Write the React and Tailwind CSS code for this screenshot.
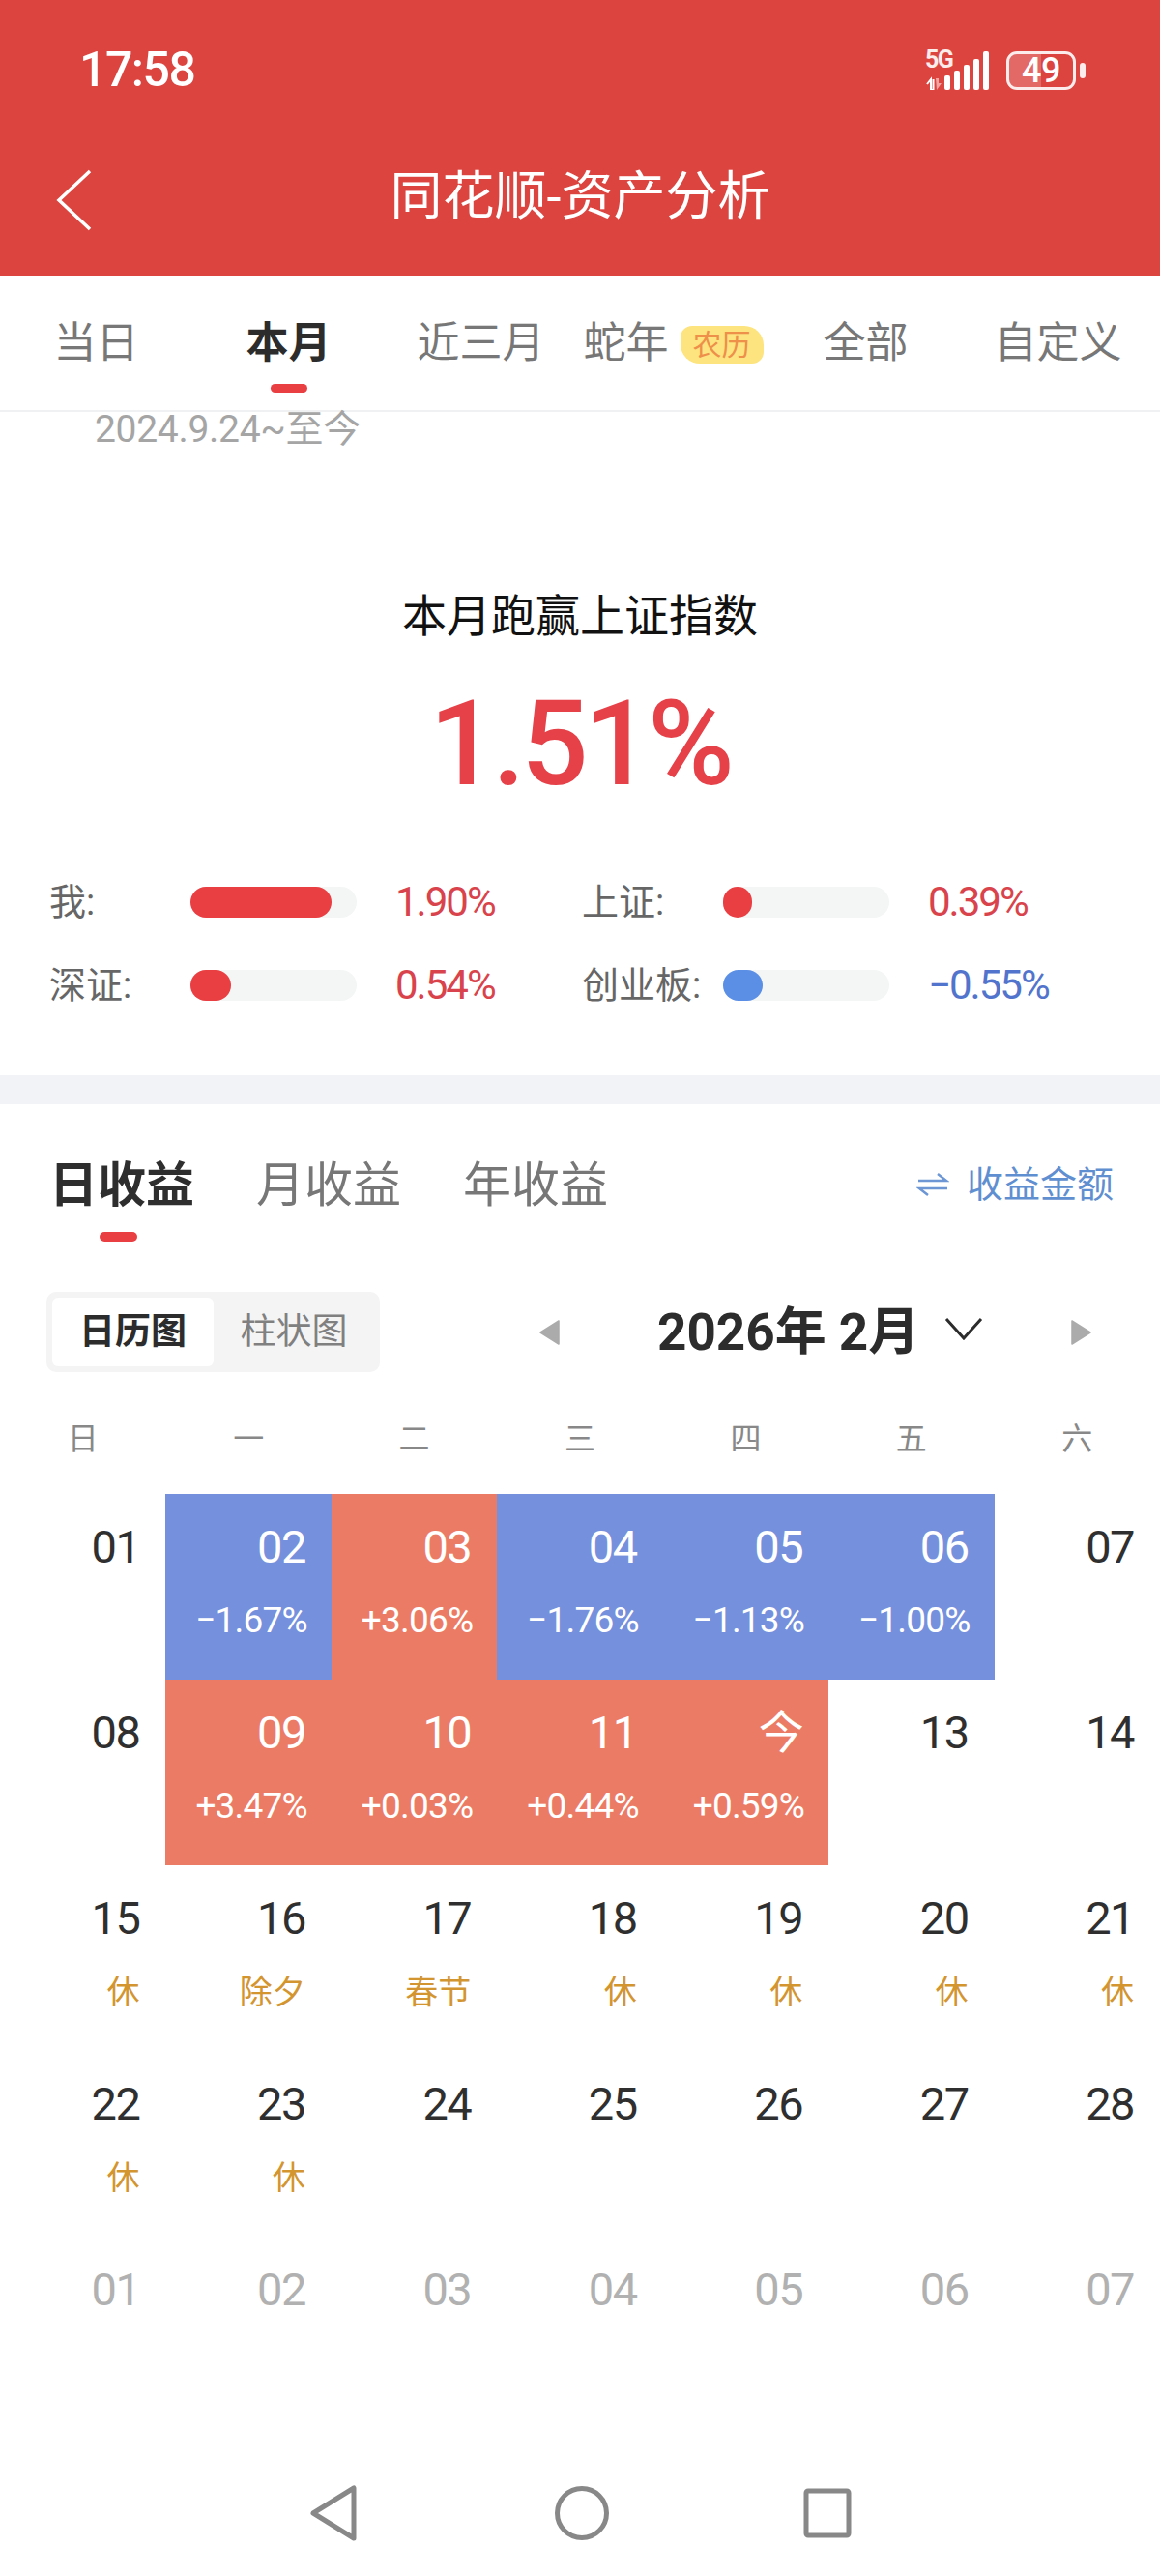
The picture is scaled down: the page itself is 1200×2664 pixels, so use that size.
import React from 'react';

const FONT = '[font-family:Roboto,"Noto_Sans_CJK_SC",sans-serif]';

const periodTabs = ['当日', '本月', '近三月', '蛇年', '全部', '自定义'];

const compareRows = [
  [
    { label: '我:', value: '1.90%', fill: 'w-[146px]', bar: 'bg-[#e93f43]', text: 'text-[#d9434b]' },
    { label: '上证:', value: '0.39%', fill: 'w-[30px]', bar: 'bg-[#e93f43]', text: 'text-[#d9434b]' },
  ],
  [
    { label: '深证:', value: '0.54%', fill: 'w-[42px]', bar: 'bg-[#e93f43]', text: 'text-[#d9434b]' },
    { label: '创业板:', value: '−0.55%', fill: 'w-[41px]', bar: 'bg-[#5b8fe6]', text: 'text-[#5274cc]' },
  ],
];

const weekdays = ['日', '一', '二', '三', '四', '五', '六'];

const BLUE = 'bg-[#7590dc]';
const RED = 'bg-[#ec7b65]';

const days = [
  { d: '01' },
  { d: '02', sub: '−1.67%', bg: BLUE },
  { d: '03', sub: '+3.06%', bg: RED },
  { d: '04', sub: '−1.76%', bg: BLUE },
  { d: '05', sub: '−1.13%', bg: BLUE },
  { d: '06', sub: '−1.00%', bg: BLUE },
  { d: '07' },
  { d: '08' },
  { d: '09', sub: '+3.47%', bg: RED },
  { d: '10', sub: '+0.03%', bg: RED },
  { d: '11', sub: '+0.44%', bg: RED },
  { d: '今', sub: '+0.59%', bg: RED },
  { d: '13' },
  { d: '14' },
  { d: '15', note: '休' },
  { d: '16', note: '除夕' },
  { d: '17', note: '春节' },
  { d: '18', note: '休' },
  { d: '19', note: '休' },
  { d: '20', note: '休' },
  { d: '21', note: '休' },
  { d: '22', note: '休' },
  { d: '23', note: '休' },
  { d: '24' },
  { d: '25' },
  { d: '26' },
  { d: '27' },
  { d: '28' },
  { d: '01', muted: true },
  { d: '02', muted: true },
  { d: '03', muted: true },
  { d: '04', muted: true },
  { d: '05', muted: true },
  { d: '06', muted: true },
  { d: '07', muted: true },
];

const StatusIcons = () => (
  <div className="flex items-center">
    <div className="relative w-[66px] h-[40px]">
      <span className="absolute left-0 top-[-4px] text-[25px] leading-[26px] font-bold text-white/90 tracking-[-1.5px]">5G</span>
      <svg className="absolute left-0 top-0" width="66" height="40" viewBox="0 0 66 40">
        <path d="M2 34 L6 29 V40 H8.5 V29" fill="none" stroke="#fff" strokeWidth="2" />
        <path d="M11 28 H14 V33 H17 L12 40 Z" fill="#f3a3a0" />
        <rect x="20" y="25" width="6" height="15" rx="2" fill="#fff" />
        <rect x="30" y="20" width="6" height="20" rx="2" fill="#fff" />
        <rect x="40" y="14" width="6" height="26" rx="2" fill="#fff" />
        <rect x="50" y="8" width="6" height="32" rx="2" fill="#fff" />
        <rect x="60" y="0" width="6" height="40" rx="2" fill="#fff" />
      </svg>
    </div>
    <div className="ml-[18px] relative w-[72px] h-[40px] rounded-[11px] border-[3px] border-white/90 flex items-center justify-center">
      <div className="absolute left-0 top-0 bottom-0 w-[33px] rounded-l-[8px] bg-white/20" />
      <span className="relative text-[36px] leading-[34px] font-medium text-white tracking-[-0.5px]">49</span>
    </div>
    <div className="ml-[4px] w-[6px] h-[16px] rounded-full bg-white/90" />
  </div>
);

const Header = () => (
  <header className="h-[285px] bg-[#dc4440] text-white">
    <div className="h-[145px] pl-[82px] pr-[77px] pt-[53px] flex items-start justify-between">
      <span className="text-[50px] leading-[38px] font-medium tracking-[-1.5px]">17:58</span>
      <StatusIcons />
    </div>
    <div className="relative h-[80px] flex items-center justify-center">
      <svg className="absolute left-[57px] top-[30px]" width="38" height="64" viewBox="0 0 38 64">
        <path d="M36 2 L4 32 L36 62" fill="none" stroke="#fff" strokeWidth="3.5" />
      </svg>
      <h1 className="text-[54px] leading-[80px] mt-[38px] font-normal">同花顺-资产分析</h1>
    </div>
  </header>
);

const PeriodTabs = () => (
  <nav className="h-[141px] border-b-2 border-[#f0f1f3] pr-[6px] grid grid-cols-6">
    {periodTabs.map((tab, i) => (
      <div key={tab} className="relative flex justify-center pt-[45px]">
        <span className={`text-[44px] leading-[50px] whitespace-nowrap ${i === 1 ? 'font-bold text-[#2c2c2c]' : 'text-[#777777]'}`}>
          {tab}
          {tab === '蛇年' && (
            <span className="inline-block align-top ml-[12px] mt-[7px] w-[86px] h-[39px] rounded-tl-[12px] rounded-br-[12px] rounded-tr-[20px] rounded-bl-[20px] bg-[#fde47f] text-center text-[30px] leading-[39px] text-[#ee8f4a]">农历</span>
          )}
        </span>
        {i === 1 && <span className="absolute top-[112px] left-[81px] w-[38px] h-[9px] rounded-full bg-[#e93f43]" />}
      </div>
    ))}
  </nav>
);

const Summary = () => (
  <section className="h-[686px] relative">
    <p className="h-[36px] pl-[98px] text-[39px] leading-[36px] tracking-[-0.3px] text-[#a5a5a5]">2024.9.24~至今</p>
    <h2 className="mt-[149px] text-center text-[46px] leading-[52px] text-[#111111]">本月跑赢上证指数</h2>
    <p className="mt-[42px] text-center text-[122px] leading-[130px] font-medium text-[#e64048] tracking-[-4px]">1.51%</p>
    <div className="mt-[82px] pl-[51px] flex flex-col gap-[54px]">
      {compareRows.map((row, r) => (
        <div key={r} className="grid grid-cols-[551px_1fr]">
          {row.map((item) => (
            <div key={item.label} className="flex items-center h-[32px]">
              <span className="w-[146px] text-[38px] leading-[32px] whitespace-nowrap text-[#666666]">{item.label}</span>
              <div className="w-[172px] h-[32px] rounded-full bg-[#f4f6f6]">
                <div className={`h-full rounded-full ${item.fill} ${item.bar}`} />
              </div>
              <span className={`ml-[40px] text-[42px] leading-[32px] tracking-[-2px] ${item.text}`}>{item.value}</span>
            </div>
          ))}
        </div>
      ))}
    </div>
  </section>
);

const CalendarHead = () => (
  <div className="pt-[48px]">
    <div className="h-[70px] pl-[51px] pr-[48px] flex items-center justify-between">
      <div className="flex gap-[64px] text-[50px] leading-[60px] text-[#777777] pt-[2px]">
        <div className="relative font-bold text-[#2e2e2e]">
          日收益
          <span className="absolute top-[78px] left-[52px] w-[39px] h-[10px] rounded-full bg-[#e93f43]" />
        </div>
        <div>月收益</div>
        <div>年收益</div>
      </div>
      <div className="flex items-center text-[38px] leading-[50px] text-[#5f8fd0]">
        <svg width="34" height="26" viewBox="0 0 34 26" className="mr-[18px]">
          <path d="M2 9 H31 L22 2" fill="none" stroke="#6c97d4" strokeWidth="2.5" />
          <path d="M32 17 H3 L12 24" fill="none" stroke="#6c97d4" strokeWidth="2.5" />
        </svg>
        收益金额
      </div>
    </div>
    <div className="mt-[76px] h-[83px] pl-[48px] pr-[71px] flex items-center">
      <div className="w-[345px] h-[83px] rounded-[10px] bg-[#f4f4f5] p-[6px] flex text-[37px] leading-[71px] text-center">
        <div className="w-[167px] rounded-[6px] bg-white font-bold text-[#2c2c2c]">日历图</div>
        <div className="flex-1 text-[#808080]">柱状图</div>
      </div>
      <svg width="21" height="26" viewBox="0 0 21 26" className="ml-[165px]">
        <path d="M20 1 V25 L1 13 Z" fill="#ababab" stroke="#ababab" strokeWidth="1.5" strokeLinejoin="round" />
      </svg>
      <span className="ml-[101px] text-[53px] leading-[60px] font-bold text-[#2c2c2c] whitespace-nowrap">2026年 2月</span>
      <svg width="40" height="24" viewBox="0 0 40 24" className="ml-[26px] -mt-[8px]">
        <path d="M2 2 L20 22 L38 2" fill="none" stroke="#2c2c2c" strokeWidth="3" />
      </svg>
      <svg width="21" height="26" viewBox="0 0 21 26" className="ml-auto">
        <path d="M1 1 V25 L20 13 Z" fill="#ababab" stroke="#ababab" strokeWidth="1.5" strokeLinejoin="round" />
      </svg>
    </div>
  </div>
);

const DayCell = ({ day }) => (
  <div className={`h-[192px] pr-[27px] text-right ${day.bg || ''}`}>
    <div className={`pt-[28px] text-[47px] leading-[54px] tracking-[-1.5px] ${day.bg ? 'text-white' : day.muted ? 'text-[#b1b1b1]' : 'text-[#2f2f2f]'}`}>
      {day.d}
    </div>
    {day.sub && <div className="mt-[24px] -mr-[2px] text-[37px] leading-[50px] font-[450] tracking-[-0.8px] text-white">{day.sub}</div>}
    {day.note && <div className="mt-[24px] text-[34px] leading-[50px] text-[#d3952f]">{day.note}</div>}
  </div>
);

const Calendar = () => (
  <div>
    <div className="mt-[49px] grid grid-cols-7 text-center text-[32px] leading-[40px] text-[#888888]">
      {weekdays.map((w) => (
        <div key={w}>{w}</div>
      ))}
    </div>
    <div className="mt-[37px] grid grid-cols-7">
      {days.map((day, i) => (
        <DayCell key={i} day={day} />
      ))}
    </div>
  </div>
);

const NavBar = () => (
  <div className="mt-[64px] h-[60px] flex items-center justify-center">
    <svg width="56" height="60" viewBox="0 0 56 60" className="mr-[198px]">
      <path d="M47 4 V56 L5 30 Z" fill="none" stroke="#888888" strokeWidth="5" strokeLinejoin="round" />
    </svg>
    <svg width="58" height="60" viewBox="0 0 58 60">
      <circle cx="29" cy="30" r="25.5" fill="none" stroke="#888888" strokeWidth="5" />
    </svg>
    <svg width="50" height="52" viewBox="0 0 50 52" className="ml-[200px]">
      <rect x="3" y="3" width="44" height="46" rx="2" fill="none" stroke="#888888" strokeWidth="5" />
    </svg>
  </div>
);

export default function App() {
  return (
    <div className={`w-[1200px] h-[2664px] overflow-hidden bg-white ${FONT}`}>
      <Header />
      <PeriodTabs />
      <Summary />
      <div className="h-[30px] bg-[#f2f3f7]" />
      <CalendarHead />
      <Calendar />
      <NavBar />
    </div>
  );
}
